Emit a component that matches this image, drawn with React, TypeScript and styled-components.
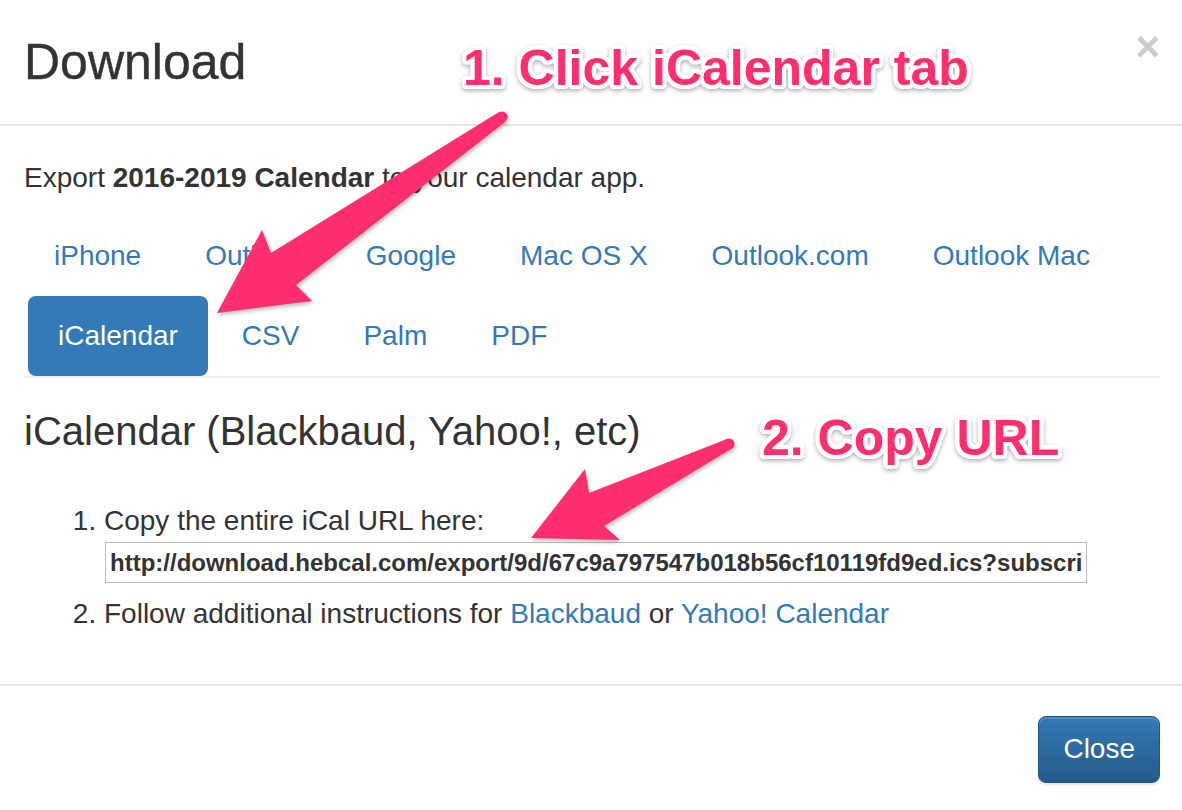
import styled, { createGlobalStyle } from 'styled-components'

const PINK = '#ff2e6e'
const BLUE = '#337ab7'

const tabs = ['iPhone', 'Outlook', 'Google', 'Mac OS X', 'Outlook.com', 'Outlook Mac', 'iCalendar', 'CSV', 'Palm', 'PDF']
const ACTIVE = 'iCalendar'

const URL = 'http://download.hebcal.com/export/9d/67c9a797547b018b56cf10119fd9ed.ics?subscribe=1'

const App = () => {
  return (
    <Modal>
      <GlobalStyle />
      <Header>
        <Title>Download</Title>
        <CloseX>×</CloseX>
      </Header>
      <Body>
        <Lead>
          Export <strong>2016-2019 Calendar</strong> to your calendar app.
        </Lead>
        <Pills>
          {tabs.map(t => (
            <Pill key={t} $active={t === ACTIVE}>
              <a>{t}</a>
            </Pill>
          ))}
        </Pills>
        <Heading>iCalendar (Blackbaud, Yahoo!, etc)</Heading>
        <Steps>
          <li>
            Copy the entire iCal URL here:
            <UrlInput readOnly value={URL} />
          </li>
          <Step>
            Follow additional instructions for <Link>Blackbaud</Link> or{' '}
            <Link>Yahoo! Calendar</Link>
          </Step>
        </Steps>
      </Body>
      <Footer>
        <CloseButton>Close</CloseButton>
      </Footer>

      {/* annotation arrows drawn over the dialog */}
      <Arrows width="1182" height="810" viewBox="0 0 1182 810">
        <g fill={PINK}>
          <path d="M499 112 L271 253 L262 230 L217 313 L312 301 L296 285 L505 122 Z" />
          <circle cx="502" cy="117" r="5.5" />
          <path d="M727 439 L589 493 L585 469 L531 538 L620 540 L604 526 L731 449 Z" />
          <circle cx="729" cy="444" r="5.5" />
        </g>
      </Arrows>
      <Callout $top={43} $left={463}>1. Click iCalendar tab</Callout>
      <Callout $top={413} $left={762}>2. Copy URL</Callout>
    </Modal>
  )
}

const GlobalStyle = createGlobalStyle`
  body {
    margin: 0;
    background: #fff;
    font-family: 'Liberation Sans', Arial, Helvetica, sans-serif;
    color: #333;
  }
`

const Modal = styled.div`
  position: relative;
  width: 1182px;
  height: 810px;
  overflow: hidden;
  background: #fff;
`

const Header = styled.header`
  display: flex;
  justify-content: space-between;
  align-items: center;
  height: 124px;
  padding: 0 22px 0 24px;
  border-bottom: 2px solid #e5e5e5;
`

const Title = styled.h4`
  margin: 0;
  font-size: 50px;
  font-weight: 400;
  line-height: 54px;
  color: #333;
  -webkit-text-stroke: 0.4px #333;
`

const CloseX = styled.span`
  align-self: flex-start;
  margin-top: 26px;
  font-size: 42px;
  font-weight: 700;
  line-height: 42px;
  color: #cccccc;
`

const Body = styled.div`
  padding: 32px 22px 50px 24px;
  font-size: 28px;
  line-height: 40px;
`

const Lead = styled.p`
  margin: 0 0 18px;
`

const Pills = styled.ul`
  display: flex;
  flex-wrap: wrap;
  margin: 0;
  padding: 0;
  list-style: none;
  border-bottom: 2px solid #eeeeee;
`

const Pill = styled.li<{ $active?: boolean }>`
  & + & {
    margin-left: 4px;
  }

  & > a {
    display: block;
    padding: 20px 30px;
    border-radius: 8px;
    color: ${p => (p.$active ? '#fff' : BLUE)};
    background: ${p => (p.$active ? BLUE : 'transparent')};
  }
`

const Heading = styled.h3`
  margin: 31px 0 0;
  font-size: 40px;
  font-weight: 400;
  line-height: 44px;
  color: #333;
`

const Steps = styled.ol`
  margin: 48px 0 0;
  padding-left: 80px;
`

const Step = styled.li`
  margin-top: 11px;
`

const UrlInput = styled.input`
  display: block;
  box-sizing: border-box;
  width: 982px;
  height: 41px;
  margin: 1px 0 0 1px;
  padding: 0 4px;
  border: 1px solid #bdbdbd;
  font-family: 'Liberation Sans', Arial, sans-serif;
  font-size: 24px;
  font-weight: 700;
  color: #333;
  outline: none;
`

const Link = styled.a`
  color: ${BLUE};
`

const Footer = styled.footer`
  display: flex;
  justify-content: flex-end;
  padding: 30px 22px 0 24px;
  border-top: 2px solid #e5e5e5;
`

const CloseButton = styled.button`
  padding: 12px 24px 13px;
  border: 1px solid #245580;
  border-radius: 8px;
  background: linear-gradient(to bottom, #337ab7 0%, #265a88 100%);
  box-shadow: inset 0 2px 0 rgba(255, 255, 255, 0.15), 0 2px 2px rgba(0, 0, 0, 0.1);
  color: #fff;
  font-family: 'Liberation Sans', Arial, sans-serif;
  font-size: 28px;
  line-height: 40px;
`

const Arrows = styled.svg`
  position: absolute;
  top: 0;
  left: 0;
  pointer-events: none;
  filter: drop-shadow(1px 2px 2px rgba(0, 0, 0, 0.3));
`

const Callout = styled.span<{ $top: number; $left: number }>`
  position: absolute;
  top: ${p => p.$top}px;
  left: ${p => p.$left}px;
  font-size: 50px;
  font-weight: 700;
  line-height: 50px;
  white-space: nowrap;
  color: ${PINK};
  text-shadow:
    4px 0 0 #fff, -4px 0 0 #fff, 0 4px 0 #fff, 0 -4px 0 #fff,
    3px 3px 0 #fff, -3px 3px 0 #fff, 3px -3px 0 #fff, -3px -3px 0 #fff,
    4px 2px 0 #fff, -4px 2px 0 #fff, 4px -2px 0 #fff, -4px -2px 0 #fff,
    2px 4px 0 #fff, -2px 4px 0 #fff, 2px -4px 0 #fff, -2px -4px 0 #fff;
  filter: drop-shadow(0 2px 2px rgba(0, 0, 0, 0.3));
`

export default App
